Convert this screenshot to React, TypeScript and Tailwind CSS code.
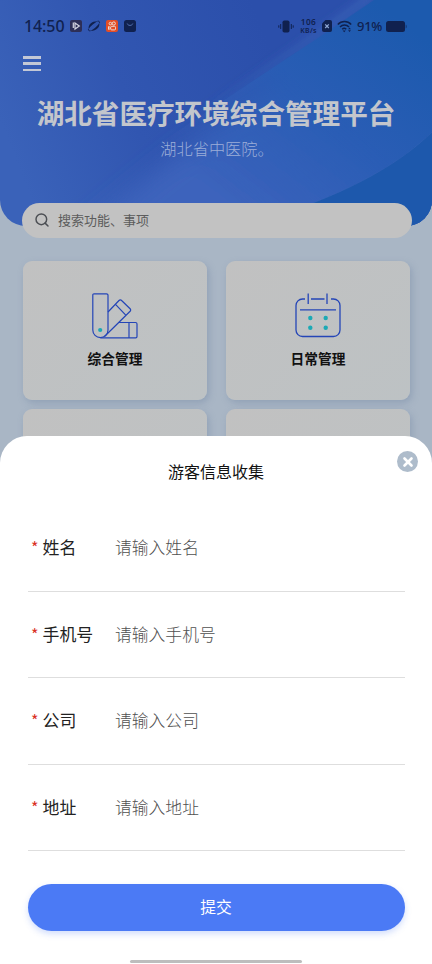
import { Search, X } from "lucide-react";

const fields = [
  { label: "姓名", placeholder: "请输入姓名" },
  { label: "手机号", placeholder: "请输入手机号" },
  { label: "公司", placeholder: "请输入公司" },
  { label: "地址", placeholder: "请输入地址" },
];

function StatusBar() {
  return (
    <div className="flex h-[52px] items-center justify-between pl-6 pr-[25px] text-[#10214f]">
      <div className="flex items-center">
        <span className="w-[46px] font-['Noto_Sans'] text-[16px] font-medium leading-none tracking-[-0.100px]">
          14:50
        </span>
        <svg width="66" height="12" viewBox="0 0 66 12" fill="none">
          <rect width="12" height="12" rx="2" fill="#2d2f57" />
          <path d="M5 3 9.300 6 5 9zM3.300 2.500v5.500" stroke="#d5d6e2" strokeWidth="1.200" />
          <path
            d="M18.700 8.800C18 4.500 22 1 27.500 1.200 24.500 2.800 21 5.500 18.700 8.800ZM29.300 3.200C30 7.500 26 11 20.500 10.800 23.500 9.200 27 6.500 29.300 3.200Z"
            fill="#10214f"
          />
          <path d="M27.500 1.200c1.500-.2 2.600.5 1.800 2M18.700 8.800c-.8 1.500.3 2.200 1.800 2" stroke="#10214f" strokeWidth=".9" />
          <rect x="36" width="12" height="12" rx="2" fill="#e44d26" />
          <g stroke="#ecdcd6" strokeWidth="1">
            <circle cx="40.400" cy="3.600" r="1.300" />
            <circle cx="43.800" cy="3.500" r="1.600" />
            <rect x="40.700" y="6.300" width="4.800" height="3.600" rx="1" />
            <path d="m40.500 7.400-2-.8v2.800l2-.8" />
          </g>
          <rect x="54" width="12" height="12" rx="2.500" fill="#10214f" />
          <path d="M57.200 3.600c.8 2.400 4.800 2.400 5.600 0" stroke="#5574b4" strokeWidth="1" />
        </svg>
      </div>

      <div className="flex items-center">
        <svg width="16" height="13" viewBox="0 0 16 13" className="mr-[5px]">
          <rect x="4.500" y=".5" width="7" height="12" rx="1.800" fill="currentColor" />
          <path
            d="M2.700 4v5M.8 5.300v2.400M13.300 4v5M15.200 5.300v2.400"
            stroke="currentColor"
            strokeWidth="1"
          />
        </svg>
        <div className="mr-[4px] flex w-[19px] flex-col items-center gap-px whitespace-nowrap font-['Noto_Sans'] font-semibold">
          <span className="h-[8px] text-[8.300px] leading-[8px] tracking-[0.400px]">106</span>
          <span className="h-[7px] text-[7px] leading-[7px] tracking-[0.300px]">KB/s</span>
        </div>
        <svg width="10" height="12" viewBox="0 0 10 12" className="mr-[5px]" fill="none">
          <path d="M3.500 0H8a2 2 0 0 1 2 2v8a2 2 0 0 1-2 2H2a2 2 0 0 1-2-2V3.500L3.500 0Z" fill="currentColor" />
          <path d="m3.200 4.400 3.600 3.600M6.800 4.400 3.200 8" stroke="#8ba3d0" strokeWidth="1.300" />
        </svg>
        <svg width="15" height="13" viewBox="0 0 15 13" className="mr-[5px]" fill="none">
          <path
            d="M.8 4.600c3.600-4.100 9.800-4.100 13.400 0M3 7c2.500-2.800 6.500-2.800 9 0M5.200 9.200c1.300-1.300 2.700-1.300 4 0"
            stroke="currentColor"
            strokeWidth="1.500"
          />
          <path d="m7.200 12.300-1.600-1.900h3.200zM12.500 7.500l1.400 1.700h-2.800zM12.500 12l-1.400-1.700h2.800z" fill="currentColor" />
        </svg>
        <span className="mr-1 w-[25px] whitespace-nowrap font-['Noto_Sans'] text-[13px] font-medium leading-none tracking-[-0.300px]">
          91%
        </span>
        <svg width="21" height="11" viewBox="0 0 21 11" fill="currentColor">
          <rect width="19" height="11" rx="2.500" />
          <path d="M19.600 3.500c1.600.5 1.600 3.500 0 4z" opacity=".6" />
        </svg>
      </div>
    </div>
  );
}

function HeaderBackdrop() {
  return (
    <svg className="absolute inset-0" width="432" height="226" viewBox="0 0 432 226" fill="none">
      <defs>
        <linearGradient id="base" x1="0" y1="120" x2="260" y2="20" gradientUnits="userSpaceOnUse">
          <stop stopColor="#3a62b9" />
          <stop offset=".45" stopColor="#3156b1" />
          <stop offset="1" stopColor="#2b4fab" />
        </linearGradient>
        <linearGradient id="band" x1="400" y1="20" x2="250" y2="220" gradientUnits="userSpaceOnUse">
          <stop stopColor="#1c5aae" />
          <stop offset=".5" stopColor="#2a5db5" />
          <stop offset="1" stopColor="#3c63bc" />
        </linearGradient>
        <linearGradient id="sweep" x1="372" y1="0" x2="190" y2="130" gradientUnits="userSpaceOnUse">
          <stop stopColor="#446bbd" stopOpacity=".6" />
          <stop offset=".5" stopColor="#4067bb" stopOpacity=".4" />
          <stop offset="1" stopColor="#3c62ba" stopOpacity="0" />
        </linearGradient>
        <linearGradient id="maskfade" x1="275" y1="60" x2="190" y2="160" gradientUnits="userSpaceOnUse">
          <stop stopColor="#fff" />
          <stop offset="1" stopColor="#fff" stopOpacity="0" />
        </linearGradient>
        <mask id="sharp">
          <rect width="432" height="226" fill="url(#maskfade)" />
        </mask>
        <filter id="wide" x="-20%" y="-20%" width="140%" height="140%">
          <feGaussianBlur stdDeviation="12" />
        </filter>
        <filter id="soft" x="-20%" y="-20%" width="140%" height="140%">
          <feGaussianBlur stdDeviation="4" />
        </filter>
      </defs>
      <rect width="432" height="226" fill="url(#base)" />
      <path d="M412 -10C320 60 260 95 205 135 155 170 110 210 60 250h460V-10z" fill="url(#band)" filter="url(#wide)" />
      <path d="M372 -4C312 40 248 82 180 130" stroke="url(#sweep)" strokeWidth="8" filter="url(#soft)" />
      <path d="M374 0C310 44 250 82 180 130 140 158 100 190 60 226h372V0z" fill="url(#band)" mask="url(#sharp)" />
      <path d="M432 132c-30 30-75 54-119 71-22 9-40 16-60 23h179z" fill="#1d58ac" />
      <path d="M432 132c-30 30-75 54-119 71" stroke="#4770bf" strokeWidth="1" opacity=".25" />
    </svg>
  );
}

function SwatchIcon() {
  return (
    <svg width="46" height="46" viewBox="0 0 46 46" fill="none" stroke="#2445b7" strokeWidth="1.200">
      <path d="M2 .8h12.500a1.500 1.500 0 0 1 1.500 1.500V37a7.500 7.500 0 0 1-15.200 0V2A1.200 1.200 0 0 1 2 .8Z" />
      <path d="m16 19 11-11.500a1.800 1.800 0 0 1 2.600 0l8.500 8.200a1.800 1.800 0 0 1 0 2.600L12.500 43.500M23.500 11.300l10.500 11" />
      <path d="M27 29.500h16.500a1.500 1.500 0 0 1 1.500 1.500v12.500a1.300 1.300 0 0 1-1.300 1.300H8.500M37 29.500v15.300" />
      <circle cx="8.200" cy="37" r="2.100" fill="#1ba9b5" stroke="none" />
    </svg>
  );
}

function CalendarIcon() {
  return (
    <svg width="46" height="46" viewBox="0 0 46 46" fill="none" stroke="#2445b7" strokeWidth="1.300">
      <path d="M10 6H7.500A6.500 6.500 0 0 0 1 12.500V37a6.500 6.500 0 0 0 6.500 6.500h31A6.500 6.500 0 0 0 45 37V12.500A6.500 6.500 0 0 0 38.500 6H36M16 6h13.500M13.200.500v10.500M32 .5V11M5 16.800h36" />
      <g fill="#1ba9b5" stroke="none">
        <circle cx="15.300" cy="25" r="2.200" />
        <circle cx="30.700" cy="25" r="2.200" />
        <circle cx="15.300" cy="34.800" r="2.200" />
        <circle cx="30.700" cy="34.800" r="2.200" />
      </g>
    </svg>
  );
}

const cardClass =
  "h-[138.500px] rounded-[9px] bg-linear-to-br from-[#c1c1c1] to-[#bdc2c4] shadow-[2px_3px_7px_rgba(110,130,160,0.400)]";

export default function App() {
  return (
    <div className="relative h-[964px] w-[432px] overflow-hidden bg-[#a9b6c5] font-['Noto_Sans_CJK_SC',sans-serif]">
      <header className="relative h-[226px] overflow-hidden rounded-b-[26px]">
        <HeaderBackdrop />
        <div className="relative">
          <StatusBar />
          <div className="ml-[23px] mt-1 flex h-[15px] w-[18px] flex-col justify-between">
            <span className="h-[2.500px] bg-[#c3c8d6]" />
            <span className="h-[2.500px] bg-[#c3c8d6]" />
            <span className="h-[2.500px] bg-[#c3c8d6]" />
          </div>
          <h1 className="mt-[21px] text-center text-[27.600px] font-bold leading-[40px] text-[#c3c6cc]">
            湖北省医疗环境综合管理平台
          </h1>
          <p className="mt-[4px] pl-[2px] text-center text-[16.200px] font-light leading-6 text-[#9caed8]">
            湖北省中医院。
          </p>
        </div>
      </header>

      <div className="relative mx-[22px] -mt-[23px] flex h-[35px] w-[389.500px] items-center rounded-full bg-[#c2c2c2] pl-[12px]">
        <Search size={16} strokeWidth={2.200} className="-mt-px text-[#4c4f54]" />
        <span className="-mt-[2px] ml-2 text-[13px] leading-5 text-[#5c5c5c]">搜索功能、事项</span>
      </div>

      <main className="ml-[23px] mt-[23px] grid w-[387px] grid-cols-2 gap-x-[19px] gap-y-[9px]">
        <div className={cardClass}>
          <div className="flex flex-col items-center pt-8">
            <SwatchIcon />
            <span className="mt-[9px] text-[13.700px] font-bold leading-5 text-[#111]">综合管理</span>
          </div>
        </div>
        <div className={cardClass}>
          <div className="flex flex-col items-center pt-8">
            <CalendarIcon />
            <span className="mt-[9px] text-[13.700px] font-bold leading-5 text-[#111]">日常管理</span>
          </div>
        </div>
        <div className={cardClass} />
        <div className={cardClass} />
      </main>

      <section className="absolute inset-x-0 bottom-0 flex h-[528.500px] flex-col rounded-t-[27px] bg-white px-[27.500px]">
        <h2 className="mt-[23px] text-center text-[16px] leading-6 text-[#111]">游客信息收集</h2>
        <button className="absolute right-[14px] top-[15.500px] flex size-[21px] items-center justify-center rounded-full bg-[#aebccb] text-white">
          <X size={14} strokeWidth={4.500} />
        </button>

        <div className="mt-[22.500px]">
          {fields.map(({ label, placeholder }) => (
            <div
              key={label}
              className="flex h-[86.500px] items-center border-b border-[#dedede] pb-px pl-[3.500px]"
            >
              <span className="w-[11.500px] text-[16px] leading-6 text-[#d93025]">*</span>
              <span className="w-[72.500px] text-[16.900px] leading-6 text-[#222]">{label}</span>
              <span className="text-[16.800px] font-light leading-6 text-[#505050]">{placeholder}</span>
            </div>
          ))}
        </div>

        <button className="mt-[33px] h-[46.500px] rounded-full bg-[#4b7af5] text-[15.800px] leading-6 text-white shadow-[0_3px_6px_rgba(75,122,245,0.250)]">
          提交
        </button>
        <div className="mx-auto mt-[29px] h-[3px] w-[172px] rounded-full bg-[#bdbdbd]" />
      </section>
    </div>
  );
}
